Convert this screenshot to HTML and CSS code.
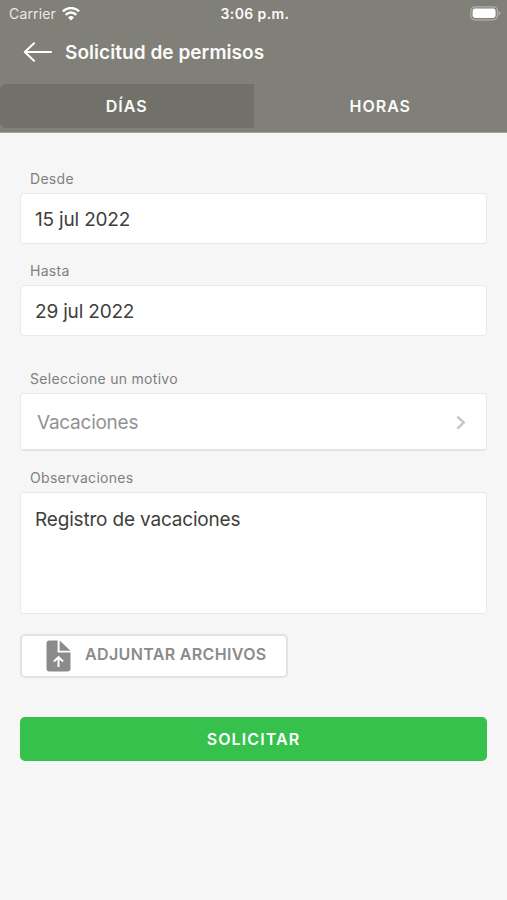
FILE: index.html
```html
<!DOCTYPE html>
<html lang="es">
<head>
    <meta charset="UTF-8">
    <meta name="viewport" content="width=device-width, initial-scale=1.0">
    <title>Solicitud de permisos</title>
    <link rel="stylesheet" href="styles.css">
</head>
<body>

    <header class="header">
        <!-- Status bar -->
        <div class="status-bar">
            <div class="carrier">
                <span>Carrier</span>
                <svg class="wifi" width="18" height="14" viewBox="0 0 18 14" fill="none" stroke="#fff" stroke-width="2.5">
                    <path d="M0.8 4.4 A11.8 11.8 0 0 1 17.2 4.4"/>
                    <path d="M3.7 7.8 A7.5 7.5 0 0 1 14.3 7.8"/>
                    <path d="M9 13.4 L6.1 10.5 A4.2 4.2 0 0 1 11.9 10.5 Z" fill="#fff" stroke="none"/>
                </svg>
            </div>
            <span class="time">3:06 p.m.</span>
            <div class="battery">
                <svg width="31" height="15" viewBox="0 0 31 15">
                    <rect x="0.8" y="0.8" width="26.6" height="13" rx="4" fill="none" stroke="#b0b0ac" stroke-width="1.2"/>
                    <rect x="2.6" y="2.6" width="23" height="9.4" rx="2.4" fill="#fff"/>
                    <path d="M28.6 5 Q30.4 5.8 30.4 7.3 Q30.4 8.8 28.6 9.6 Z" fill="#b0b0ac"/>
                </svg>
            </div>
        </div>

        <!-- Title -->
        <div class="title-bar">
            <svg class="back" width="30" height="20" viewBox="0 0 30 20" fill="none" stroke="#fff" stroke-width="2" stroke-linecap="round" stroke-linejoin="round">
                <path d="M11 1.2 L1.8 10 L11 18.8 M1.8 10 H28"/>
            </svg>
            <h1>Solicitud de permisos</h1>
        </div>

        <!-- Tabs -->
        <nav class="tabs">
            <a class="tab active">DÍAS</a>
            <a class="tab">HORAS</a>
        </nav>
    </header>

    <main class="form">
        <div class="input-group">
            <label>Desde</label>
            <div class="field">15 jul 2022</div>
        </div>
        <div class="input-group group-end">
            <label>Hasta</label>
            <div class="field">29 jul 2022</div>
        </div>
        <div class="input-group">
            <label>Seleccione un motivo</label>
            <div class="field select">
                <span>Vacaciones</span>
                <svg width="10" height="16" viewBox="0 0 10 16" fill="none" stroke="#c6c6c6" stroke-width="2.4">
                    <path d="M1.3 1.6 L7.8 7.6 L1.3 13.6"/>
                </svg>
            </div>
        </div>
        <div class="input-group">
            <label>Observaciones</label>
            <div class="field notes">Registro de vacaciones</div>
        </div>

        <!-- Buttons -->
        <button class="attach">
            <svg width="25" height="32" viewBox="0 0 25 32">
                <path d="M3.5 0.5 H11.6 V12.6 H24.5 V28.5 Q24.5 31.5 21.5 31.5 H3.5 Q0.5 31.5 0.5 28.5 V3.5 Q0.5 0.5 3.5 0.5 Z" fill="#8b8b8b"/>
                <path d="M13.6 0.5 L24.5 10.8 H13.6 Z" fill="#8b8b8b"/>
                <path d="M12.5 27 V17.6 M7.9 21.4 L12.5 17.2 L17.1 21.4" fill="none" stroke="#fff" stroke-width="2"/>
            </svg>
            <span>ADJUNTAR ARCHIVOS</span>
        </button>

        <button class="submit">SOLICITAR</button>
    </main>

</body>
</html>
```

FILE: styles.css
```css
* {
    box-sizing: border-box;
    margin: 0;
    padding: 0;
}

body {
    font-family: Inter, 'Liberation Sans', sans-serif;
    background-color: #f6f6f6;
    color: #3e3e3c;
    min-height: 100vh;
}

/* Header */
.header {
    height: 133px;
    background-color: #807f78;
    border-bottom: 1px solid #a3a29d;
    color: #fbfbfa;
}

.status-bar {
    display: grid;
    grid-template-columns: 1fr auto 1fr;
    align-items: center;
    height: 27px;
    padding: 0 6px 0 9px;
}

.carrier {
    display: flex;
    align-items: center;
    gap: 6px;
    font-size: 14px;
    letter-spacing: 0.15px;
    color: #e9e9e7;
}

.time {
    font-size: 14px;
    font-weight: 600;
    letter-spacing: 0.4px;
}

.battery {
    display: flex;
    justify-content: flex-end;
}

.title-bar {
    display: flex;
    align-items: center;
    gap: 12px;
    height: 50px;
    padding-left: 23px;
}

h1 {
    font-size: 19px;
    font-weight: 600;
    letter-spacing: 0.05px;
}

.tabs {
    display: flex;
    margin-top: 7px;
}

.tab {
    flex: 1;
    height: 44px;
    line-height: 44px;
    text-align: center;
    font-size: 16px;
    font-weight: 600;
    letter-spacing: 1px;
}

.tab.active {
    background-color: #727169;
    border-radius: 6px 0 0 6px;
}

/* Form */
.form {
    padding: 37px 20px 0;
}

.input-group {
    margin-bottom: 18px;
}

.group-end {
    margin-bottom: 34px;
}

label {
    display: block;
    height: 18px;
    line-height: 18px;
    margin: 0 0 5px 10px;
    font-size: 14px;
    letter-spacing: 0.3px;
    color: #80807e;
}

.field {
    display: flex;
    align-items: center;
    height: 51px;
    padding: 1px 14px 0;
    background-color: #fff;
    border: 1px solid #e9e9e9;
    border-radius: 4px;
    font-size: 19px;
    letter-spacing: -0.18px;
}

.select {
    justify-content: space-between;
    height: 58px;
    padding: 2px 20px 0 16px;
    border-bottom: 2px solid #e3e5e5;
    letter-spacing: -0.25px;
    color: #929292;
}

.notes {
    align-items: flex-start;
    height: 122px;
    padding-top: 15px;
}

/* Buttons */
button {
    display: flex;
    align-items: center;
    font-family: inherit;
    font-size: 16px;
    font-weight: 600;
}

.attach {
    gap: 14px;
    width: 268px;
    height: 44px;
    margin-top: 20px;
    padding-left: 24px;
    background-color: #fff;
    border: 2px solid #dfe3e2;
    border-radius: 5px;
    letter-spacing: 0.35px;
    color: #8b8b8b;
    white-space: nowrap;
}

.attach span {
    padding-bottom: 4px;
}

.submit {
    justify-content: center;
    width: 100%;
    height: 44px;
    margin-top: 39px;
    background-color: #35c14b;
    border: none;
    border-radius: 5px;
    letter-spacing: 1.1px;
    color: #fff;
}
```
